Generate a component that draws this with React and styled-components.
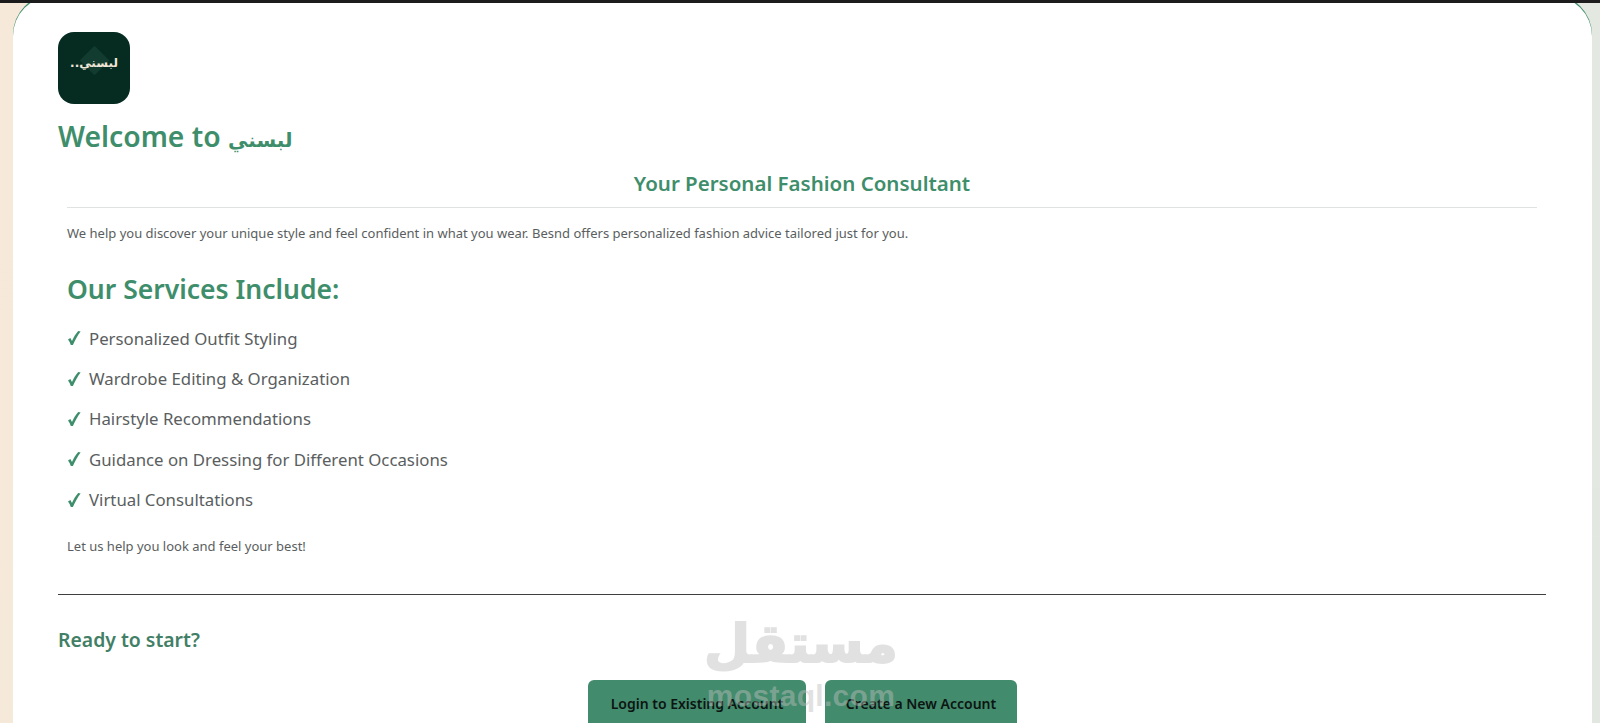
import React from 'react'
import styled, { createGlobalStyle } from 'styled-components'

const services = [
    'Personalized Outfit Styling',
    'Wardrobe Editing & Organization',
    'Hairstyle Recommendations',
    'Guidance on Dressing for Different Occasions',
    'Virtual Consultations',
]

const App = () => (
    <>
        <GlobalStyle />
        <Page>
            <Card>
                <Logo>
                    <LogoMark />
                    <LogoText>لبسني..</LogoText>
                </Logo>
                <Title>Welcome to <span>لبسني</span></Title>
                <Intro>
                    <Subtitle>Your Personal Fashion Consultant</Subtitle>
                    <SoftRule />
                    <Small>We help you discover your unique style and feel confident in what you wear. Besnd offers personalized fashion advice tailored just for you.</Small>
                    <ServicesTitle>Our Services Include:</ServicesTitle>
                    <List>
                        {services.map(item => (
                            <Item key={item}>
                                <Check viewBox="0 0 14 16">
                                    <path d="M1 9.6 L3.4 7.9 L5 11 C6.6 7.2 8.8 3.8 11.2 1 L13.6 1.4 C10.6 5.4 8 10 5.9 15 L3.8 15 C3.2 13 2.2 11.2 1 9.6 Z" />
                                </Check>
                                {item}
                            </Item>
                        ))}
                    </List>
                    <Closing>Let us help you look and feel your best!</Closing>
                </Intro>
                <DarkRule />
                <Ready>Ready to start?</Ready>
                <Actions>
                    <Button $width={218}>Login to Existing Account</Button>
                    <Button $width={192}>Create a New Account</Button>
                </Actions>
            </Card>
            <Watermark>
                <WatermarkAr>مستقل</WatermarkAr>
                <WatermarkEn>mostaql.com</WatermarkEn>
            </Watermark>
        </Page>
    </>
)

export default App

const GlobalStyle = createGlobalStyle`
    html, body {
        margin   : 0;
        height   : 100%;
        overflow : hidden;
    }
    body {
        font-family : "Noto Sans", "DejaVu Sans", sans-serif;
    }
`

const Page = styled.div`
    position   : relative;
    height     : 723px;
    overflow   : hidden;
    box-sizing : border-box;
    padding    : 0 8px 0 13px;
    background : linear-gradient(100deg, #f7e9d9 0%, #e9e6dc 50%, #e2e8e1 100%);

    &::before {
        content    : '';
        position   : absolute;
        top        : 0;
        left       : 0;
        right      : 0;
        height     : 3px;
        background : #1c1c1c;
    }
`

const Card = styled.main`
    box-sizing    : border-box;
    height        : 900px;
    margin-top    : -4px;
    padding       : 36px 46px 0 45px;
    background    : #fff;
    border-radius : 40px 40px 0 0;
    box-shadow    : 0 -1.5px 0 0 #3f8f6b;
`

const Logo = styled.div`
    position        : relative;
    display         : flex;
    align-items     : center;
    justify-content : center;
    width           : 72px;
    height          : 72px;
    overflow        : hidden;
    background      : #062c22;
    border-radius   : 16px;
`

const LogoMark = styled.div`
    position   : absolute;
    top        : 18px;
    left       : 26px;
    width      : 21px;
    height     : 21px;
    background : #123c30;
    transform  : rotate(45deg);
`

const LogoText = styled.span`
    position    : relative;
    direction   : rtl;
    font-family : "DejaVu Sans", sans-serif;
    font-size   : 12px;
    font-weight : 700;
    line-height : 1;
    color       : #efe6d6;
    margin-top  : -10px;
`

const Title = styled.h1`
    margin      : 12px 0 0;
    font-size   : 28.3px;
    font-weight : 600;
    line-height : 40px;
    color       : #3e8e6b;

    span {
        font-family : "DejaVu Sans", sans-serif;
        font-size   : 20px;
    }
`

const Intro = styled.section`
    padding : 0 9px;
`

const Subtitle = styled.h2`
    margin      : 8px 0 0;
    font-size   : 20.5px;
    font-weight : 600;
    line-height : 30px;
    text-align  : center;
    color       : #3e8e6b;
`

const SoftRule = styled.hr`
    margin     : 9px 0 0;
    border     : 0;
    height     : 1px;
    background : #dfe2e1;
`

const Small = styled.p`
    margin      : 16px 0 0;
    font-size   : 13px;
    line-height : 18px;
    color       : #5a5e60;
`

const ServicesTitle = styled.h3`
    margin      : 29px 0 0;
    font-size   : 26.5px;
    font-weight : 600;
    line-height : 36px;
    color       : #3e8e6b;
`

const List = styled.ul`
    margin     : 11px 0 0;
    padding    : 0;
    list-style : none;
`

const Item = styled.li`
    display     : flex;
    align-items : center;
    gap         : 8px;
    height      : 40.4px;
    font-size   : 16.8px;
    color       : #5a5e60;
`

const Check = styled.svg`
    width  : 14px;
    height : 16px;
    fill   : #3e8e6b;
`

const Closing = styled(Small)`
    margin-top : 17px;
`

const DarkRule = styled.hr`
    margin     : 39px 0 0;
    border     : 0;
    height     : 1.5px;
    background : #3d3f41;
`

const Ready = styled.h4`
    margin      : 31px 0 0;
    font-size   : 19.4px;
    font-weight : 600;
    line-height : 28px;
    color       : #427f66;
`

const Actions = styled.div`
    display         : flex;
    justify-content : center;
    gap             : 19px;
    margin-top      : 26px;
    padding-left    : 1px;
`

const Button = styled.button`
    width          : ${p => p.$width}px;
    height         : 48px;
    padding        : 0 0 2px;
    border         : 0;
    border-radius  : 6px;
    background     : #428b6c;
    font-family    : inherit;
    font-size      : 14px;
    font-weight    : 600;
    color          : #0c1512;
`

const Watermark = styled.div`
    position       : absolute;
    top            : 608px;
    left           : 696px;
    width          : 210px;
    display        : flex;
    flex-direction : column;
    align-items    : center;
    pointer-events : none;
    color          : #bebebe;
    opacity        : .45;
`

const WatermarkAr = styled.div`
    font-family         : "DejaVu Sans", sans-serif;
    font-size           : 53px;
    font-weight         : 700;
    line-height         : 72px;
    -webkit-text-stroke : 2px #bebebe;
`

const WatermarkEn = styled.div`
    font-family    : "Liberation Sans", sans-serif;
    font-size      : 30px;
    font-weight    : 700;
    line-height    : 32px;
    letter-spacing : .3px;
`
